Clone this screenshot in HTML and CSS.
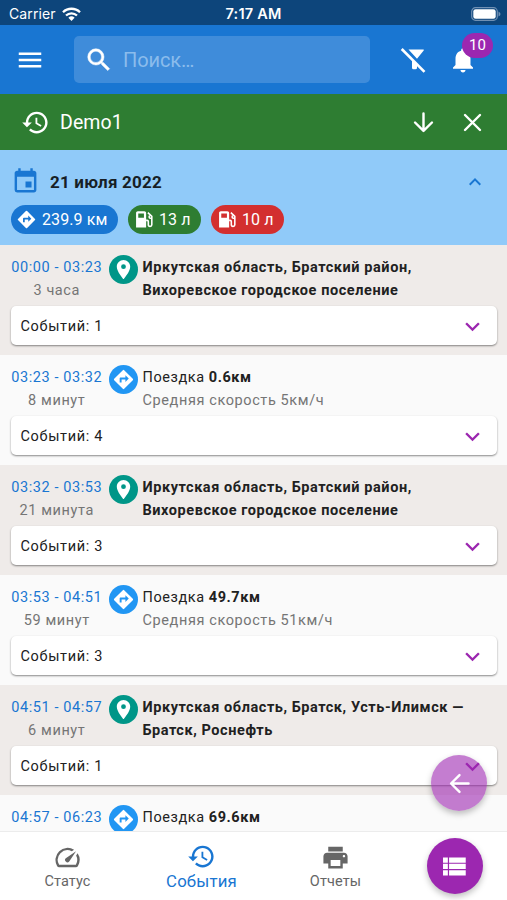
FILE: index.html
```
<!DOCTYPE html>
<html lang="ru">
<head>
<meta charset="utf-8">
<title>События</title>
<link rel="stylesheet" href="styles.css">
</head>
<body>
<svg class="defs" width="0" height="0" aria-hidden="true">
  <symbol id="history" viewBox="0 0 24 24"><path d="M13 3c-4.970 0-9 4.030-9 9H1l3.890 3.890.07.14L9 12H6c0-3.870 3.130-7 7-7s7 3.130 7 7-3.130 7-7 7c-1.930 0-3.680-.79-4.940-2.060l-1.420 1.420C8.270 19.990 10.510 21 13 21c4.970 0 9-4.030 9-9s-4.030-9-9-9zm-1 5v5l4.280 2.540.72-1.210-3.500-2.080V8H12z"/></symbol>
  <symbol id="route" viewBox="0 0 24 24"><path d="M21.710 11.290l-9-9a1 1 0 0 0-1.420 0l-9 9a1 1 0 0 0 0 1.420l9 9a1 1 0 0 0 1.420 0l9-9a1 1 0 0 0 0-1.420zM14 14.500V12h-4v3H8v-4c0-.55.45-1 1-1h5V7.500l3.500 3.500-3.500 3.500z"/></symbol>
  <symbol id="pin" viewBox="0 0 24 24"><path d="M12 2C8.130 2 5 5.130 5 9c0 5.250 7 13 7 13s7-7.750 7-13c0-3.870-3.130-7-7-7zm0 9.500a2.500 2.500 0 0 1 0-5 2.500 2.500 0 0 1 0 5z"/></symbol>
  <symbol id="fuel" viewBox="0 0 24 24"><path fill-rule="evenodd" d="M3.500 21V4.500c0-1.100.9-2 2-2h7.500c1.100 0 2 .9 2 2V21H3.500zM6 5v5h6.500V5H6z"/><path fill="none" stroke="currentColor" stroke-width="1.800" d="M15 13h1.200c.8 0 1.300.5 1.300 1.300V18c0 2.500 4 2.500 4 0V8.500L17 4.200M21.500 10.500h-1.700c-1.800 0-1.800-2.800-.2-3.500"/></symbol>
  <symbol id="chevron" viewBox="0 0 24 24"><path d="M7.410 8.590L12 13.170l4.590-4.580L18 10l-6 6-6-6z"/></symbol>
</svg>
<div class="screen">
  <div class="status">
    <div class="carrier">Carrier
      <svg width="19" height="14" viewBox="0 0 19 14"><g fill="none" stroke="#fff" stroke-width="2.300"><path d="M1 5.200a12.200 12.200 0 0 1 17 0"/><path d="M4 8.500a8 8 0 0 1 11 0"/></g><path fill="#fff" d="M6.400 10.800a4.500 4.500 0 0 1 6.200 0L9.500 14z"/></svg>
    </div>
    <div class="clock">7:17 AM</div>
    <svg class="battery" width="30" height="14" viewBox="0 0 30 14"><rect x=".7" y=".7" width="25.600" height="12.600" rx="3.800" fill="none" stroke="#7090b3" stroke-width="1.200"/><rect x="2.300" y="2.300" width="22.400" height="9.400" rx="2.300" fill="#fff"/><path fill="#7090b3" d="M27.500 4.500q2 1 2 2.500t-2 2.500z"/></svg>
  </div>
  <header class="toolbar">
    <svg class="i30" viewBox="0 0 24 24"><path d="M3 18h18v-2H3v2zm0-5h18v-2H3v2zm0-7v2h18V6H3z"/></svg>
    <div class="search">
      <svg class="i30 bold" viewBox="0 0 24 24"><path d="M15.500 14h-.79l-.28-.27A6.470 6.470 0 0 0 16 9.500 6.500 6.500 0 1 0 9.500 16c1.610 0 3.090-.59 4.230-1.570l.27.28v.79l5 4.990L20.490 19l-4.990-5zm-6 0C7.010 14 5 11.990 5 9.500S7.010 5 9.500 5 14 7.010 14 9.500 11.990 14 9.500 14z"/></svg>
      <span>Поиск…</span>
    </div>
    <svg class="filter" width="26" height="26" viewBox="0 0 26 26"><path d="M8.500 2.500h14.700q1.200 0 .5 1L17 11.800zM12 12l5 5.500v3.300q0 1.500-1.500 1.500h-2q-1.500 0-1.500-1.500z"/><path fill="none" stroke="#fff" stroke-width="2.600" d="M1.700 2L24.500 24.800"/></svg>
    <div class="bell">
      <svg class="i30" viewBox="0 0 24 24"><path d="M12 22c1.100 0 2-.9 2-2h-4c0 1.100.89 2 2 2zm6-6v-5c0-3.070-1.640-5.640-4.500-6.320V4c0-.83-.67-1.500-1.500-1.500s-1.500.67-1.500 1.500v.68C7.630 5.360 6 7.920 6 11v5l-2 2v1h16v-1l-2-2z"/></svg>
      <span class="badge">10</span>
    </div>
  </header>
  <div class="device">
    <svg class="i29"><use href="#history"/></svg>
    <span class="name">Demo1</span>
    <svg class="i29 down" viewBox="0 0 24 24"><path class="line" d="M12 4.500v14M5 12l7 7 7-7"/></svg>
    <svg class="i29" viewBox="0 0 24 24"><path class="line" d="M5.800 5.800l12.400 12.400M18.200 5.800L5.800 18.200"/></svg>
  </div>
  <section class="day">
    <div class="date">
      <svg class="i29" viewBox="0 0 24 24"><path d="M17 12h-5v5h5v-5zM16 1v2H8V1H6v2H5c-1.110 0-1.990.9-1.990 2L3 19a2 2 0 0 0 2 2h14c1.100 0 2-.9 2-2V5c0-1.100-.9-2-2-2h-1V1h-2zm3 18H5V8h14v11z"/></svg>
      <b>21 июля 2022</b>
      <svg class="up"><use href="#chevron"/></svg>
    </div>
    <div class="chips">
      <span class="chip blue"><svg><use href="#route"/></svg>239.9 км</span>
      <span class="chip green"><svg><use href="#fuel"/></svg>13 л</span>
      <span class="chip red"><svg><use href="#fuel"/></svg>10 л</span>
    </div>
  </section>
  <main class="list">
    <article class="row stop">
      <div class="info"><div class="time"><span>00:00 - 03:23</span><small>3 часа</small></div><div class="dot"><svg><use href="#pin"/></svg></div><div class="text"><b>Иркутская область, Братский район,<br>Вихоревское городское поселение</b></div></div>
      <div class="card">Событий: 1<svg><use href="#chevron"/></svg></div>
    </article>
    <article class="row trip">
      <div class="info"><div class="time"><span>03:23 - 03:32</span><small>8 минут</small></div><div class="dot"><svg><use href="#route"/></svg></div><div class="text">Поездка <b>0.6км</b><small>Средняя скорость 5км/ч</small></div></div>
      <div class="card">Событий: 4<svg><use href="#chevron"/></svg></div>
    </article>
    <article class="row stop">
      <div class="info"><div class="time"><span>03:32 - 03:53</span><small>21 минута</small></div><div class="dot"><svg><use href="#pin"/></svg></div><div class="text"><b>Иркутская область, Братский район,<br>Вихоревское городское поселение</b></div></div>
      <div class="card">Событий: 3<svg><use href="#chevron"/></svg></div>
    </article>
    <article class="row trip">
      <div class="info"><div class="time"><span>03:53 - 04:51</span><small>59 минут</small></div><div class="dot"><svg><use href="#route"/></svg></div><div class="text">Поездка <b>49.7км</b><small>Средняя скорость 51км/ч</small></div></div>
      <div class="card">Событий: 3<svg><use href="#chevron"/></svg></div>
    </article>
    <article class="row stop">
      <div class="info"><div class="time"><span>04:51 - 04:57</span><small>6 минут</small></div><div class="dot"><svg><use href="#pin"/></svg></div><div class="text"><b>Иркутская область, Братск, Усть-Илимск —<br>Братск, Роснефть</b></div></div>
      <div class="card">Событий: 1<svg><use href="#chevron"/></svg></div>
    </article>
    <article class="row trip">
      <div class="info"><div class="time"><span>04:57 - 06:23</span></div><div class="dot"><svg><use href="#route"/></svg></div><div class="text">Поездка <b>69.6км</b></div></div>
    </article>
  </main>
  <nav class="tabs">
    <a class="tab"><svg class="i29" viewBox="0 0 24 24"><path d="M20.380 8.570l-1.230 1.850a8 8 0 0 1-.22 7.580H5.070A8 8 0 0 1 15.580 6.850l1.850-1.230A10 10 0 0 0 3.350 19a2 2 0 0 0 1.720 1h13.850a2 2 0 0 0 1.740-1 10 10 0 0 0-.27-10.440zm-9.790 6.840a2 2 0 0 0 2.830 0l5.660-8.490-8.490 5.660a2 2 0 0 0 0 2.830z"/></svg><span>Статус</span></a>
    <a class="tab active"><svg class="i29"><use href="#history"/></svg><span>События</span></a>
    <a class="tab"><svg class="i29" viewBox="0 0 24 24"><path d="M19 8H5c-1.660 0-3 1.340-3 3v6h4v4h12v-4h4v-6c0-1.660-1.340-3-3-3zm-3 11H8v-5h8v5zm3-7c-.55 0-1-.45-1-1s.45-1 1-1 1 .45 1 1-.45 1-1 1zm-1-9H6v4h12V3z"/></svg><span>Отчеты</span></a>
    <div class="fabcell"><div class="fab"><svg class="i29" viewBox="0 0 24 24"><path d="M2.500 4.500h4v4.300h-4zM7.500 4.500h13.800v4.300H7.500zM2.500 9.800h4v4.300h-4zM7.500 9.800h13.800v4.300H7.500zM2.500 15.100h4v4.300h-4zM7.500 15.100h13.800v4.300H7.500z"/></svg></div></div>
  </nav>
  <div class="fab back"><svg class="i29" viewBox="0 0 24 24"><path class="line" d="M19.500 12h-14M12 5l-7 7 7 7"/></svg></div>
</div>
</body>
</html>
```

FILE: styles.css
```
* { box-sizing: border-box; }
body { margin: 0; font-family: Roboto, sans-serif; }
svg { fill: currentColor; display: block; flex: none; }
.defs { position: absolute; }
.screen { position: relative; width: 507px; height: 900px; overflow: hidden; display: flex; flex-direction: column; background: #fafafa; }
.i30 { width: 30px; height: 30px; }
.i29 { width: 29px; height: 29px; }
.bold { stroke: currentColor; stroke-width: .4; }
.line { fill: none; stroke: currentColor; stroke-width: 2; stroke-linecap: round; stroke-linejoin: round; }

.status { height: 25px; flex: none; background: #0d457b; color: #fff; display: grid; grid-template-columns: 1fr auto 1fr; align-items: center; padding: 2px 6px 0 9px; font-family: Inter, sans-serif; font-size: 14px; }
.carrier { display: flex; align-items: center; gap: 6px; letter-spacing: .1px; }
.clock { font-size: 14.5px; font-weight: 600; letter-spacing: .2px; margin-left: -3px; }
.battery { justify-self: end; }

.toolbar { height: 69px; flex: none; background: #1976d2; color: #fff; display: flex; align-items: center; padding: 0 29px 0 15px; }
.search { width: 296px; height: 47px; margin-left: 29px; padding-left: 9.5px; border-radius: 5px; background: #3f8cda; display: flex; align-items: center; gap: 9.5px; font-size: 20px; letter-spacing: -.1px; color: #8bbcec; }
.search svg { color: #fff; }
.filter { margin-left: 30px; }
.bell { position: relative; margin-left: auto; }
.badge { position: absolute; left: 14px; top: -12px; width: 31px; height: 25px; border-radius: 13px; background: #9c27b0; font-size: 15px; line-height: 25px; text-align: center; letter-spacing: .1px; }

.device { height: 56px; flex: none; background: #2e7d32; color: #fff; display: flex; align-items: center; padding: 0 20px 0 21px; }
.name { margin-left: 10px; font-size: 19.5px; letter-spacing: .1px; }
.down { margin-left: auto; margin-right: 20px; }

.day { height: 95px; flex: none; background: #90caf9; padding: 17px 20px 0 11px; }
.date { display: flex; align-items: center; height: 29px; color: #1976d2; }
.date b { margin-left: 10px; font-size: 17px; font-weight: 700; letter-spacing: .2px; color: #171f26; }
.up { width: 24px; height: 24px; margin-left: auto; transform: rotate(180deg); }
.chips { display: flex; gap: 10px; margin-top: 9px; }
.chip { height: 29px; border-radius: 15px; display: flex; align-items: center; gap: 5px; padding: 0 10px 0 5px; color: #fff; font-size: 16px; letter-spacing: .1px; }
.chip svg { width: 21px; height: 21px; }
.chip.blue { width: 107px; background: #1976d2; }
.chip.green { width: 73px; background: #2e7d32; }
.chip.red { width: 73px; background: #d32f2f; }

.list { flex: 1; min-height: 0; overflow: hidden; }
.row { height: 110px; padding: 11px 10px 0 11px; background: #fafafa; font-size: 14.5px; letter-spacing: .57px; color: #212121; }
.stop { background: #efebe9; }
.info { display: flex; height: 50px; line-height: 23px; }
.time { width: 91.5px; text-align: center; white-space: nowrap; color: #1976d2; }
.row small { display: block; font-size: 14.5px; letter-spacing: .6px; color: #757575; }
.dot { width: 29px; height: 29px; margin: -1px 4.500px 0 6.500px; border-radius: 50%; background: #2196f3; color: #fff; display: grid; place-items: center; }
.stop .dot { background: #009688; }
.dot svg { width: 23px; height: 23px; }
.text { white-space: nowrap; }
.card { height: 39px; border-radius: 5px; background: #fff; box-shadow: 0 1px 2px rgba(0,0,0,.45); display: flex; align-items: center; justify-content: space-between; padding: 1px 10px 0 9.5px; letter-spacing: .65px; }
.card svg { width: 29px; height: 29px; color: #9c27b0; }

.tabs { height: 69px; flex: none; background: #fff; border-top: 1px solid #ececec; display: grid; grid-template-columns: 134px 134px 134px 105px; color: #666; }
.tab { display: flex; flex-direction: column; align-items: center; padding-top: 11px; font-size: 14.5px; line-height: 20px; letter-spacing: .1px; }
.tab.active { color: #1976d2; font-size: 16.8px; letter-spacing: .15px; padding-top: 10px; }
.tab span { margin-left: 1px; }
.fabcell { display: flex; justify-content: center; padding-top: 6px; }
.fab { width: 56px; height: 56px; border-radius: 50%; background: #9c27b0; color: #fff; display: grid; place-items: center; box-shadow: 0 3px 6px rgba(0,0,0,.25); }
.back { position: absolute; left: 431px; top: 755px; background: rgba(156,39,176,.6); }
```
